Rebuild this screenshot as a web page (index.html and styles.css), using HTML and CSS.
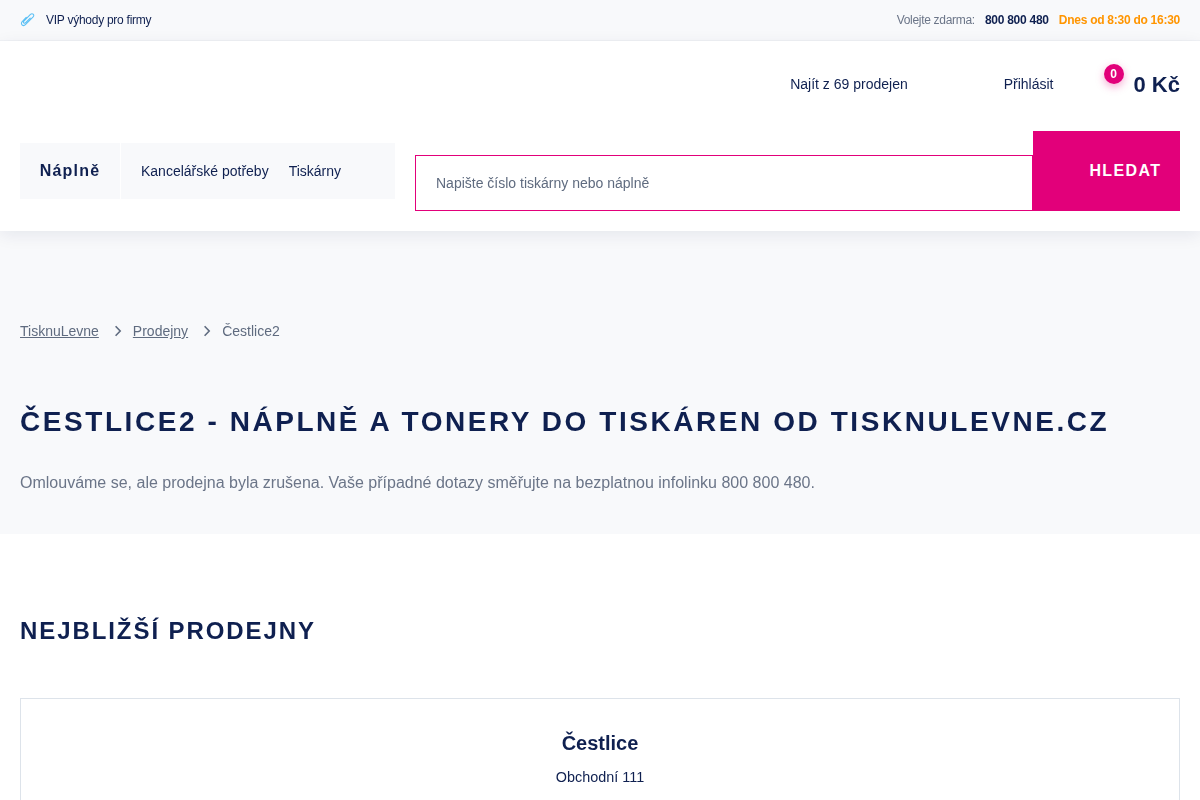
FILE: index.html
```html
<!DOCTYPE html>
<html lang="cs">
<head>
    <meta charset="UTF-8">
    <meta name="viewport" content="width=device-width, initial-scale=1.0">
    <title>Čestlice2 - TisknuLevne</title>
    <link rel="stylesheet" href="styles.css">
</head>

<body>
    <div class="page">
        <div class="top-bar">
            <a class="vip-link" href="#">
                <svg class="clip-icon" width="16" height="14" viewBox="0 0 16 14" fill="none" stroke="#5cc0f5" stroke-width="1.1" stroke-linecap="round" stroke-linejoin="round">
                    <path d="M6.2 4.4 2.2 8.6C1.1 9.8 1.3 11.2 2.2 12 3.2 12.8 4.4 12.7 5.4 11.7L12.9 4.2C14 3.1 14 1.9 13.2 1.2 12.3.5 11.2.7 10.2 1.7L3.9 8.2C3.3 8.9 3.4 9.6 3.9 10 4.5 10.5 5.1 10.3 5.7 9.7L10.2 5.2"/>
                </svg>
                VIP výhody pro firmy
            </a>
            <div class="contact">
                <span class="contact-label">Volejte zdarma:</span>
                <span class="contact-phone">800 800 480</span>
                <span class="contact-hours">Dnes od 8:30 do 16:30</span>
            </div>
        </div>

        <header class="header">
            <div class="header-top">
                <a class="header-link stores-link" href="#">Najít z 69 prodejen</a>
                <a class="header-link login-link" href="#">Přihlásit</a>
                <a class="cart" href="#">
                    <span class="cart-badge">0</span>
                    <span class="cart-price">0 Kč</span>
                </a>
            </div>
            <div class="header-bottom">
                <nav class="nav-tabs">
                    <a class="nav-main" href="#">Náplně</a>
                    <div class="nav-rest">
                        <a href="#">Kancelářské potřeby</a>
                        <a href="#">Tiskárny</a>
                    </div>
                </nav>
                <form class="search">
                    <input class="search-input" type="text" placeholder="Napište číslo tiskárny nebo náplně">
                    <button class="search-btn" type="button">HLEDAT</button>
                </form>
            </div>
        </header>

        <section class="intro">
            <div class="breadcrumb">
                <a href="#">TisknuLevne</a>
                <svg class="crumb-sep" width="8" height="12" viewBox="0 0 8 12" fill="none" stroke="#5f6b7f" stroke-width="1.6"><path d="M1.6 1.2 6.2 6 1.6 10.8"/></svg>
                <a href="#">Prodejny</a>
                <svg class="crumb-sep" width="8" height="12" viewBox="0 0 8 12" fill="none" stroke="#5f6b7f" stroke-width="1.6"><path d="M1.6 1.2 6.2 6 1.6 10.8"/></svg>
                <span>Čestlice2</span>
            </div>
            <h1 class="page-title">Čestlice2 - náplně a tonery do tiskáren od TisknuLevne.cz</h1>
            <p class="intro-text">Omlouváme se, ale prodejna byla zrušena. Vaše případné dotazy směřujte na bezplatnou infolinku 800 800 480.</p>
        </section>

        <section class="nearest">
            <h2 class="nearest-title">Nejbližší prodejny</h2>
            <div class="store-card">
                <h3 class="store-name">Čestlice</h3>
                <p class="store-street">Obchodní 111</p>
            </div>
        </section>
    </div>
</body>
</html>
```

FILE: styles.css
```css
/* General Page Styling */
html, body {
    height: 800px;
    overflow: hidden;
}

body {
    margin: 0;
    font-family: "Liberation Sans", Arial, sans-serif;
    color: #0f2050;
    background: #ffffff;
}

.page {
    will-change: opacity;
}

a {
    color: inherit;
    text-decoration: none;
}

/* Top Bar */
.top-bar {
    display: flex;
    justify-content: space-between;
    align-items: center;
    height: 40px;
    padding: 0 20px;
    background: #f8f9fb;
    border-bottom: 1px solid #f0f2f5;
    font-size: 12px;
    letter-spacing: -0.26px;
}

.vip-link {
    display: flex;
    align-items: center;
    gap: 10px;
}

.contact {
    display: flex;
    gap: 10px;
}

.contact-label {
    color: #6b7588;
    letter-spacing: -0.3px;
}

.contact-phone {
    font-weight: 700;
}

.contact-hours {
    font-weight: 700;
    color: #ff9500;
}

/* Header */
.header {
    position: relative;
    height: 190px;
    padding: 0 20px;
    background: #ffffff;
    box-shadow: 0 4px 16px rgba(15, 31, 75, 0.08);
}

.header-top {
    display: flex;
    justify-content: flex-end;
    align-items: center;
    height: 86px;
    font-size: 14px;
}

.stores-link {
    margin-right: 96px;
}

.login-link {
    margin-right: 80px;
}

.cart {
    position: relative;
    padding-top: 2px;
    font-size: 22px;
    font-weight: 700;
}

.cart-badge {
    position: absolute;
    top: -6px;
    left: -30px;
    width: 20px;
    height: 20px;
    border-radius: 50%;
    background: #e2007a;
    box-shadow: 0 3px 8px rgba(226, 0, 122, 0.35);
    color: #ffffff;
    font-size: 12px;
    line-height: 20px;
    text-align: center;
}

.header-bottom {
    display: flex;
    align-items: flex-start;
    gap: 20px;
    margin-top: 4px;
}

.nav-tabs {
    display: flex;
    gap: 1px;
    width: 375px;
    height: 56px;
    margin-top: 12px;
}

.nav-main {
    width: 100px;
    background: #f8f9fb;
    font-size: 16px;
    font-weight: 700;
    letter-spacing: 1.2px;
    line-height: 56px;
    text-align: center;
}

.nav-rest {
    flex: 1;
    display: flex;
    gap: 20px;
    padding-left: 20px;
    background: #f8f9fb;
    font-size: 14px;
    line-height: 56px;
}

/* Search */
.search {
    flex: 1;
    display: flex;
    align-items: flex-end;
    height: 80px;
}

.search-input {
    flex: 1;
    height: 56px;
    padding: 0 20px;
    box-sizing: border-box;
    border: 1px solid #e2007a;
    border-radius: 0;
    outline: none;
    font-family: inherit;
    font-size: 14px;
}

.search-input::placeholder {
    color: #5f6b7f;
    opacity: 1;
}

.search-btn {
    width: 147px;
    height: 80px;
    padding: 0 18.5px 1px 0;
    border: none;
    background: #e2007a;
    color: #ffffff;
    font-family: inherit;
    font-size: 16px;
    font-weight: 700;
    letter-spacing: 1.4px;
    text-align: right;
    line-height: 1;
}

/* Intro */
.intro {
    height: 303px;
    padding: 0 20px;
    background: #f8f9fb;
    overflow: hidden;
}

.breadcrumb {
    display: flex;
    align-items: center;
    margin-top: 91px;
    height: 18px;
    font-size: 14px;
    color: #5f6b7f;
}

.breadcrumb a {
    text-decoration: underline;
}

.crumb-sep {
    margin: 0 11px 0 15px;
}

.page-title {
    margin: 64px 0 0;
    font-size: 28px;
    line-height: 36px;
    font-weight: 700;
    letter-spacing: 2.56px;
    text-transform: uppercase;
}

.intro-text {
    margin: 31px 0 0;
    font-size: 16px;
    line-height: 24px;
    color: #6b7588;
}

/* Nearest Stores */
.nearest {
    padding: 0 20px;
}

.nearest-title {
    margin: 79px 0 0;
    font-size: 24px;
    line-height: 36px;
    font-weight: 700;
    letter-spacing: 1.92px;
    text-transform: uppercase;
}

.store-card {
    margin-top: 49px;
    height: 300px;
    border: 1px solid #dde3ea;
    text-align: center;
}

.store-name {
    margin: 32px 0 0;
    font-size: 20px;
    line-height: 24px;
    font-weight: 700;
}

.store-street {
    margin: 12px 0 0;
    font-size: 14.4px;
    line-height: 20px;
}
```
